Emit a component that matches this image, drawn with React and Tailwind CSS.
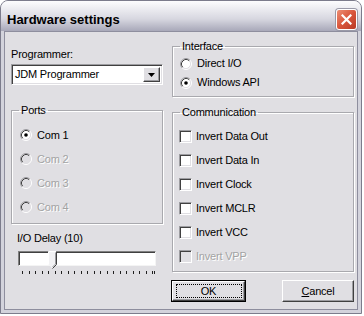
import React from 'react';

// Classic Win32 look: sunken/raised bevels are drawn with borders + inset shadows.
const FACE = 'bg-[#e0dfe3]';

const Radio = ({ checked, disabled }) => (
  <svg width="12" height="12" viewBox="0 0 12 12" className="shrink-0">
    <circle cx="6" cy="6" r="4.5" fill={disabled ? '#e0dfe3' : '#ffffff'} />
    <path d="M2.11 9.89 A5.5 5.5 0 0 1 9.89 2.11" fill="none" stroke="#9d9da1" strokeWidth="1" />
    <path d="M9.89 2.11 A5.5 5.5 0 0 1 2.11 9.89" fill="none" stroke="#ffffff" strokeWidth="1" />
    <path d="M2.82 9.18 A4.5 4.5 0 0 1 9.18 2.82" fill="none" stroke="#404040" strokeWidth="1" />
    <path d="M9.18 2.82 A4.5 4.5 0 0 1 2.82 9.18" fill="none" stroke="#e0dfe3" strokeWidth="1" />
    {checked && <circle cx="6" cy="6" r="1.8" fill="#000000" />}
  </svg>
);

const RadioRow = ({ label, checked, disabled, height = 'h-[24px]' }) => (
  <div className={`flex items-center gap-[5px] ${height}`}>
    <Radio checked={checked} disabled={disabled} />
    <span className={disabled ? 'text-[#a3a3a3] [text-shadow:1px_1px_0_#ffffff]' : 'text-black'}>{label}</span>
  </div>
);

const CheckRow = ({ label, disabled }) => (
  <div className="flex items-center gap-[4px] h-[24px]">
    <div
      className={`w-[13px] h-[13px] shrink-0 border border-t-[#9d9da1] border-l-[#9d9da1] border-b-white border-r-white shadow-[inset_1px_1px_0_#404040,inset_-1px_-1px_0_#e0dfe3] ${
        disabled ? 'bg-[#e0dfe3]' : 'bg-white'
      }`}
    />
    <span className={disabled ? 'text-[#a3a3a3] [text-shadow:1px_1px_0_#ffffff]' : 'text-black'}>{label}</span>
  </div>
);

const GroupBox = ({ title, className, children }) => (
  <fieldset className={`border border-[#a9a9ae] shadow-[1px_1px_0_#ffffff,inset_1px_1px_0_#ffffff] ${className}`}>
    <legend className="ml-[7px] px-[2px] leading-[13px]">{title}</legend>
    {children}
  </fieldset>
);

const Button = ({ children, isDefault, className }) => (
  <div className={`h-[22px] ${isDefault ? 'border border-black' : ''} ${className}`}>
    <div className="h-full flex items-center justify-center border border-t-white border-l-white border-r-[#404040] border-b-[#404040] shadow-[inset_-1px_-1px_0_#9d9da1]">
      {isDefault ? (
        <div className="w-[66px] h-[14px] border border-dotted border-black flex items-center justify-center">
          {children}
        </div>
      ) : (
        children
      )}
    </div>
  </div>
);

const App = () => {
  return (
    <div className="w-[364px] h-[316px] bg-white font-['Liberation_Sans',Arial,sans-serif] text-[11px] leading-[13px] tracking-[-0.2px] text-black">
      <div className="w-[362px] h-[314px] rounded-t-[8px] border border-[#7c7c8c] bg-[#d3d3dc] flex flex-col overflow-hidden">
        {/* Title bar */}
        <div className="h-[30px] shrink-0 flex items-center justify-between pl-[6px] pr-[4px] pt-[7px] bg-linear-to-b from-[#fdfdfe] via-[#d7d7e0] via-60% to-[#a8a8b9]">
          <span className="text-[13px] font-bold tracking-normal text-black">Hardware settings</span>
          <div className="w-[21px] h-[21px] mb-[1px] rounded-[3px] border border-white bg-linear-to-br from-[#ec8e74] via-[#d9553b] to-[#b93a26] flex items-center justify-center shadow-[0_0_0_1px_#9a9aa8]">
            <svg width="11" height="11" viewBox="0 0 11 11">
              <path d="M1.5 1.5 L9.5 9.5 M9.5 1.5 L1.5 9.5" stroke="#ffffff" strokeWidth="2.2" strokeLinecap="square" />
            </svg>
          </div>
        </div>

        {/* Client area */}
        <div className={`flex-1 mx-[3px] mb-[3px] border border-[#8e8e9e] ${FACE} pl-[6px]`}>
          <div className="grid grid-cols-[152px_182px] gap-x-[9px]">
            {/* Left column */}
            <div className="flex flex-col">
              <div className="mt-[16px]">Programmer:</div>
              <div className="mt-[3px] h-[21px] flex bg-white border border-t-[#9d9da1] border-l-[#9d9da1] border-b-white border-r-white shadow-[inset_1px_1px_0_#404040,inset_-1px_-1px_0_#e0dfe3] p-[2px]">
                <div className="flex-1 flex items-center pl-[1px]">JDM Programmer</div>
                <div className={`w-[17px] h-full ${FACE} flex items-center justify-center border border-t-white border-l-white border-r-[#404040] border-b-[#404040] shadow-[inset_-1px_-1px_0_#9d9da1]`}>
                  <svg width="7" height="4" viewBox="0 0 7 4">
                    <path d="M0 0 H7 L3.5 4 Z" fill="#000000" />
                  </svg>
                </div>
              </div>

              <GroupBox title="Ports" className="mt-[19px] h-[120px]">
                <div className="pt-[6px] pl-[8px]">
                  <RadioRow label="Com 1" checked />
                  <RadioRow label="Com 2" disabled />
                  <RadioRow label="Com 3" disabled />
                  <RadioRow label="Com 4" disabled />
                </div>
              </GroupBox>

              <div className="mt-[8px] pl-[6px]">I/O Delay (10)</div>
              <div className="relative mt-[6px] ml-[7px] w-[138px] h-[24px]">
                <div className="h-[15px] bg-white border border-t-[#808080] border-l-[#808080] border-b-[#f4f4f4] border-r-[#f4f4f4] shadow-[inset_1px_1px_0_#404040]" />
                <svg width="11" height="19" viewBox="0 0 11 19" className="absolute left-[30px] top-0">
                  <path d="M0.5 0.5 H8.5 V13.5 L4.5 17.5 L0.5 13.5 Z" fill="#f2f2f4" />
                  <path d="M0.5 13.5 V0.5 H8.5" fill="none" stroke="#ffffff" />
                  <path d="M8.5 0.5 V13.5 L4.5 17.5" fill="none" stroke="#404040" />
                  <path d="M7.5 1.5 V13 L4.5 16" fill="none" stroke="#9d9da1" />
                </svg>
                <div className="flex mt-[5px] ml-[4px]">
                  <div className="w-[131px] flex justify-between">
                    {Array.from({ length: 21 }).map((_, i) => (
                      <div key={i} className="w-[1px] h-[3px] bg-[#202020]" />
                    ))}
                  </div>
                  <div className="ml-[1px] w-[1px] h-[3px] bg-[#202020]" />
                </div>
              </div>
            </div>

            {/* Right column */}
            <div className="flex flex-col">
              <GroupBox title="Interface" className="mt-[8px] h-[57px]">
                <div className="pt-[1px] pl-[7px]">
                  <RadioRow label="Direct I/O" height="h-[19px]" />
                  <RadioRow label="Windows API" checked height="h-[19px]" />
                </div>
              </GroupBox>

              <GroupBox title="Communication" className="mt-[9px] h-[166px]">
                <div className="pt-[5px] pl-[6px]">
                  <CheckRow label="Invert Data Out" />
                  <CheckRow label="Invert Data In" />
                  <CheckRow label="Invert Clock" />
                  <CheckRow label="Invert MCLR" />
                  <CheckRow label="Invert VCC" />
                  <CheckRow label="Invert VPP" disabled />
                </div>
              </GroupBox>

              <div className="mt-[8px] flex justify-between">
                <Button isDefault className="w-[75px] -ml-[1px]">OK</Button>
                <Button className="w-[72px]">
                  <span>
                    <span className="underline">C</span>ancel
                  </span>
                </Button>
              </div>
            </div>
          </div>
        </div>
      </div>
    </div>
  );
};

export default App;
